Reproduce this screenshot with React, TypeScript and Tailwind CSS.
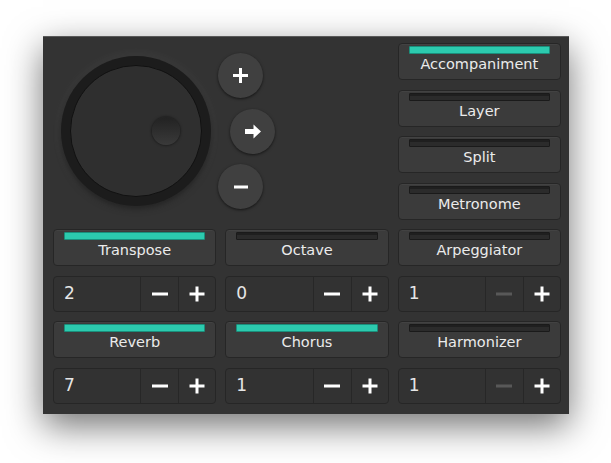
import React from "react";

const FONT = { fontFamily: '"DejaVu Sans", "Liberation Sans", sans-serif' };

function Toggle({ label, on }: { label: string; on?: boolean }) {
  return (
    <div className="h-[37px] flex flex-col rounded-[4px] border border-[#262626] bg-[#3b3b3b] shadow-[inset_0_1px_0_rgba(255,255,255,0.04)]">
      <div
        className={
          on
            ? "mx-[10px] mt-[2px] h-[8px] rounded-[1px] border border-[#1b8f7c] bg-[#2ccaae]"
            : "mx-[10px] mt-[2px] h-[8px] rounded-[1px] border border-[#1a1a1a] bg-[#2b2b2b] shadow-[inset_0_2px_0_#1f1f1f]"
        }
      />
      <div className="mt-[1px] text-center text-[14.5px] leading-[18px] text-[#ebebeb]">{label}</div>
    </div>
  );
}

function MinusIcon({ color = "#ffffff" }: { color?: string }) {
  return (
    <svg width="16" height="16" viewBox="0 0 16 16">
      <rect x="0" y="6.5" width="16" height="3" fill={color} />
    </svg>
  );
}

function PlusIcon() {
  return (
    <svg width="16" height="16" viewBox="0 0 16 16">
      <rect x="0.5" y="6.5" width="15" height="3" fill="#ffffff" />
      <rect x="6.5" y="0.5" width="3" height="15" fill="#ffffff" />
    </svg>
  );
}

function Stepper({ value, minDisabled }: { value: number; minDisabled?: boolean }) {
  return (
    <div className="h-[36px] flex rounded-[4px] border border-[#262626] bg-[#323232]">
      <div className="flex-1 flex items-center pl-[10px] text-[17px] text-[#e6e6e6]">{value}</div>
      <div className="w-[38px] flex items-center justify-center border-l border-[#272727]">
        <MinusIcon color={minDisabled ? "#585858" : "#ffffff"} />
      </div>
      <div className="w-[37px] flex items-center justify-center border-l border-[#272727]">
        <PlusIcon />
      </div>
    </div>
  );
}

function RoundButton({ children, className = "" }: { children: React.ReactNode; className?: string }) {
  return (
    <div
      className={
        "w-[45px] h-[45px] rounded-full bg-[#404040] flex items-center justify-center shadow-[0_1px_3px_rgba(0,0,0,0.6)] " +
        className
      }
    >
      {children}
    </div>
  );
}

export default function App() {
  return (
    <div className="min-h-[463px] bg-white pl-[43px] pt-[36px]" style={FONT}>
      <div className="w-[526px] h-[378px] bg-[#333333] border-t border-[#5a5a5a] shadow-[0_12px_34px_rgba(0,0,0,0.55)] pl-[10px] pr-[8px] pt-[6px]">
        <div className="grid grid-cols-3 gap-x-[9px] gap-y-[9.5px]">
          {/* Knob + transport buttons */}
          <div className="col-span-2 flex">
            <div className="ml-[8px] mt-[13px] w-[150px] h-[150px] rounded-full bg-[#1c1c1c] flex items-center justify-center shadow-[0_0_12px_rgba(255,255,255,0.09),0_3px_6px_rgba(0,0,0,0.5)]">
              <div className="w-[132px] h-[132px] rounded-full border border-[#111] bg-[#2f2f2f] flex items-center justify-end pr-[21px]">
                <div className="w-[28px] h-[28px] rounded-full bg-gradient-to-b from-[#222] to-[#3a3a3a] shadow-[0_0_3px_rgba(0,0,0,0.7)]" />
              </div>
            </div>
            <div className="ml-[7px] mt-[10px] flex flex-col gap-[10.5px]">
              <RoundButton>
                <svg width="15" height="15" viewBox="0 0 15 15">
                  <rect x="0" y="6" width="15" height="3" fill="#fff" />
                  <rect x="6" y="0" width="3" height="15" fill="#fff" />
                </svg>
              </RoundButton>
              <RoundButton className="ml-[12px]">
                <svg width="18" height="15" viewBox="0 0 18 15">
                  <path d="M1 5 H9.5 V0.5 L17 7.5 L9.5 14.5 V10 H1 Z" fill="#fff" />
                </svg>
              </RoundButton>
              <RoundButton>
                <svg width="14" height="14" viewBox="0 0 14 14">
                  <rect x="0" y="5.5" width="14" height="3" fill="#fff" />
                </svg>
              </RoundButton>
            </div>
          </div>
          <div className="flex flex-col gap-[9.5px]">
            <Toggle label="Accompaniment" on />
            <Toggle label="Layer" />
            <Toggle label="Split" />
            <Toggle label="Metronome" />
          </div>

          <Toggle label="Transpose" on />
          <Toggle label="Octave" />
          <Toggle label="Arpeggiator" />

          <Stepper value={2} />
          <Stepper value={0} />
          <Stepper value={1} minDisabled />

          <Toggle label="Reverb" on />
          <Toggle label="Chorus" on />
          <Toggle label="Harmonizer" />

          <Stepper value={7} />
          <Stepper value={1} />
          <Stepper value={1} minDisabled />
        </div>
      </div>
    </div>
  );
}
